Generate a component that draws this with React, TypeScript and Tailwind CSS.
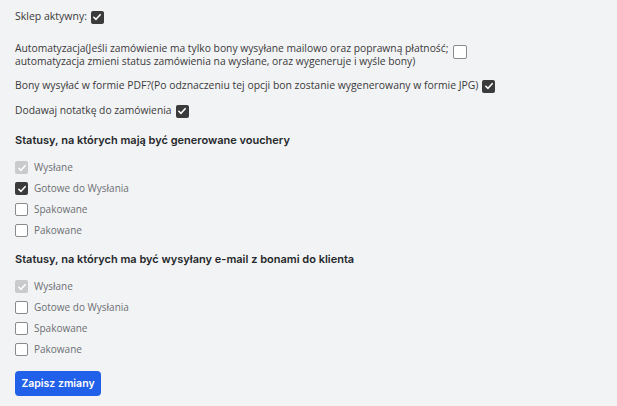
import React from "react";

type Box = "on" | "off" | "disabled";

function Check({ state, big }: { state: Box; big?: boolean }) {
  const size = big ? "w-[14px] h-[14px]" : "w-[13px] h-[13px]";
  if (state === "off") {
    return <span className={`inline-block ${size} shrink-0 rounded-[2px] border border-[#8a8a8a] bg-white`} />;
  }
  const bg = state === "on" ? "bg-[#3b3b3b]" : "bg-[#c9cacc]";
  return (
    <span className={`inline-flex items-center justify-center ${size} shrink-0 rounded-[2px] ${bg}`}>
      <svg viewBox="0 0 12 12" className="w-[10px] h-[10px]">
        <path d="M2.2 6.3 L4.8 8.8 L9.8 3.2" fill="none" stroke="white" strokeWidth="1.9" strokeLinecap="round" strokeLinejoin="round" />
      </svg>
    </span>
  );
}

const statuses = ["Wysłane", "Gotowe do Wysłania", "Spakowane", "Pakowane"];

function StatusGroup({ title, states }: { title: string; states: Box[] }) {
  return (
    <div>
      <h3 className="text-[11px] font-semibold text-[#25282b] font-['Inter',sans-serif] leading-[14px]">{title}</h3>
      <div className="mt-[14px] flex flex-col gap-[8px]">
        {statuses.map((s, i) => (
          <label key={s} className="flex items-center gap-[6px] h-[13px]">
            <Check state={states[i]} />
            <span className="text-[10px] text-[#6c6f73]">{s}</span>
          </label>
        ))}
      </div>
    </div>
  );
}

export default function App() {
  return (
    <div className="w-[617px] h-[406px] overflow-hidden bg-[#f2f3f5] font-['Open_Sans',sans-serif] text-[#3a3a3a] px-[15px] pt-[10px]">
      <div className="flex items-center gap-[4px] h-[14px] text-[10.5px]">
        <span>Sklep aktywny:</span>
        <Check state="on" />
      </div>

      <div className="mt-[18px] flex items-center gap-[5px] text-[10.3px] leading-[13px]">
        <span>
          Automatyzacja(Jeśli zamówienie ma tylko bony wysyłane mailowo oraz poprawną płatność;
          <br />
          automatyzacja zmieni status zamówienia na wysłane, oraz wygeneruje i wyśle bony)
        </span>
        <span className="mt-[-3px]">
          <Check state="off" big />
        </span>
      </div>

      <div className="mt-[11px] flex items-center gap-[4px] h-[14px] text-[10.4px]">
        <span>Bony wysyłać w formie PDF?(Po odznaczeniu tej opcji bon zostanie wygenerowany w formie JPG)</span>
        <Check state="on" />
      </div>

      <div className="mt-[11px] flex items-center gap-[4px] h-[14px] text-[10.3px]">
        <span>Dodawaj notatkę do zamówienia</span>
        <Check state="on" />
      </div>

      <div className="mt-[15px]">
        <StatusGroup title="Statusy, na których mają być generowane vouchery" states={["disabled", "on", "off", "off"]} />
      </div>

      <div className="mt-[15px]">
        <StatusGroup title="Statusy, na których ma być wysyłany e-mail z bonami do klienta" states={["disabled", "off", "off", "off"]} />
      </div>

      <button className="mt-[15px] h-[25px] w-[86px] rounded-[4px] bg-[#2160e8] text-white text-[10.5px] font-semibold font-['Inter',sans-serif]">
        Zapisz zmiany
      </button>
    </div>
  );
}
